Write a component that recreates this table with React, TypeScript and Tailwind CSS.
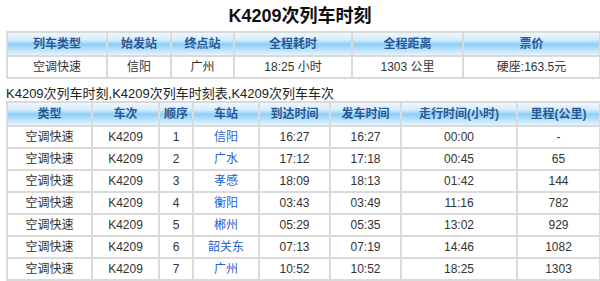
import React from "react";

const hdr =
  "bg-[linear-gradient(to_bottom,#eef7fe_0%,#d6edfc_30%,#8ecff8_52%,#b9e1fa_75%,#e6f4fd_100%)] text-[#2a5896] font-bold text-[12px] h-[24px] border-2 border-[#dadada] text-center p-0";
const td = "h-[22px] border-2 border-[#dadada] text-center p-0 text-[12px] text-[#333]";

const rows = [
  ["1", "信阳", "16:27", "16:27", "00:00", "-"],
  ["2", "广水", "17:12", "17:18", "00:45", "65"],
  ["3", "孝感", "18:09", "18:13", "01:42", "144"],
  ["4", "衡阳", "03:43", "03:49", "11:16", "782"],
  ["5", "郴州", "05:29", "05:35", "13:02", "929"],
  ["6", "韶关东", "07:13", "07:19", "14:46", "1082"],
  ["7", "广州", "10:52", "10:52", "18:25", "1303"],
];

export default function App() {
  return (
    <div
      className="w-[600px] h-[281px] bg-white overflow-hidden"
      style={{ fontFamily: '"Liberation Sans", Arial, "Noto Sans CJK SC", sans-serif' }}
    >
      <div className="h-[31px] flex items-center justify-center text-[18px] font-bold text-[#111] pt-[1px]">
        K4209次列车时刻
      </div>
      <table className="ml-[6px] w-[593px] border-collapse table-fixed">
        <colgroup>
          <col className="w-[100px]" />
          <col className="w-[64px]" />
          <col className="w-[63px]" />
          <col className="w-[118px]" />
          <col className="w-[111px]" />
          <col className="w-[137px]" />
        </colgroup>
        <thead>
          <tr>
            {["列车类型", "始发站", "终点站", "全程耗时", "全程距离", "票价"].map((h) => (
              <th key={h} className={hdr}>
                {h}
              </th>
            ))}
          </tr>
        </thead>
        <tbody>
          <tr>
            {["空调快速", "信阳", "广州", "18:25 小时", "1303 公里", "硬座:163.5元"].map((c) => (
              <td key={c} className={td}>
                {c}
              </td>
            ))}
          </tr>
        </tbody>
      </table>
      <div className="mt-[7px] ml-[6px] h-[15px] leading-[15px] text-[13px] text-[#222]">
        K4209次列车时刻,K4209次列车时刻表,K4209次列车车次
      </div>
      <table className="ml-[6px] w-[593px] border-collapse table-fixed">
        <colgroup>
          <col className="w-[85px]" />
          <col className="w-[67px]" />
          <col className="w-[34px]" />
          <col className="w-[66px]" />
          <col className="w-[71px]" />
          <col className="w-[71px]" />
          <col className="w-[116px]" />
          <col className="w-[83px]" />
        </colgroup>
        <thead>
          <tr>
            {["类型", "车次", "顺序", "车站", "到达时间", "发车时间", "走行时间(小时)", "里程(公里)"].map((h) => (
              <th key={h} className={hdr}>
                {h}
              </th>
            ))}
          </tr>
        </thead>
        <tbody>
          {rows.map((r) => (
            <tr key={r[0]}>
              <td className={td}>空调快速</td>
              <td className={td}>K4209</td>
              <td className={td}>{r[0]}</td>
              <td className={td + " !text-[#1f63d6]"}>{r[1]}</td>
              <td className={td}>{r[2]}</td>
              <td className={td}>{r[3]}</td>
              <td className={td}>{r[4]}</td>
              <td className={td}>{r[5]}</td>
            </tr>
          ))}
        </tbody>
      </table>
    </div>
  );
}
